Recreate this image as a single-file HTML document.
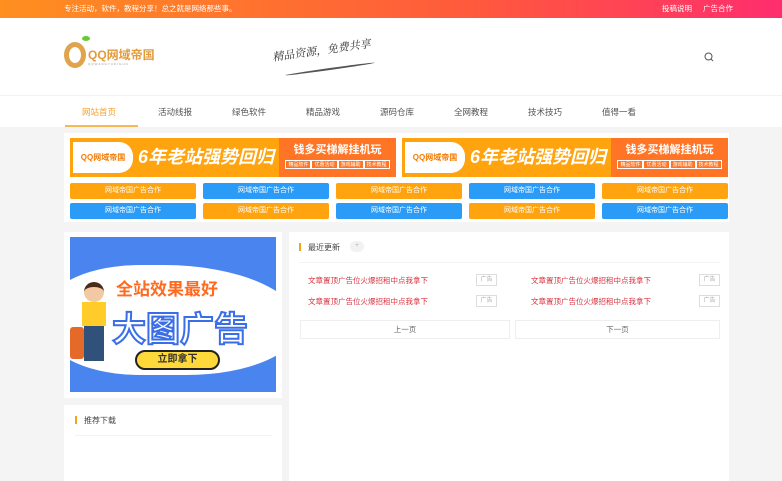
<!DOCTYPE html>
<html><head><meta charset="utf-8"><style>
*{margin:0;padding:0;box-sizing:border-box}
body{width:782px;height:481px;overflow:hidden;background:#f4f4f4;font-family:"Liberation Sans","Noto Sans CJK SC",sans-serif;font-size:8px;color:#333;position:relative}
.a{position:absolute}
.top{left:0;top:0;width:782px;height:18px;background:linear-gradient(90deg,#ff8f1f,#ff5a3c 60%,#ff2d6e);color:#fff;font-size:7.5px;line-height:18px}
.hd{left:0;top:18px;width:782px;height:109px;background:#fff}
.nav span{position:absolute;top:106px;font-size:8.5px;color:#555}
.btn{position:absolute;width:126px;height:16px;border-radius:2px;color:#fff;font-size:7px;text-align:center;line-height:16px}
.o{background:#ffa30f}.b{background:#2a9cf8}
.ban{position:absolute;top:138px;width:326px;height:39px;background:#ffa30f;overflow:hidden}
.ban .l{position:absolute;left:3px;top:4px;width:60px;height:31px;background:#fff;border-radius:0 14px 14px 0;color:#f57a00;font-weight:bold;font-size:8px;line-height:31px;text-align:center}
.ban .m{position:absolute;left:68px;top:4px;color:#fff;font-weight:bold;font-style:italic;font-size:18px;line-height:31px;white-space:nowrap}
.ban .r{position:absolute;right:0;top:0;width:117px;height:39px;background:#ff7525;color:#fff;text-align:center;font-weight:bold;font-size:11px;padding-top:3px}
.ban .r i{display:inline-block;font-style:normal;font-size:5px;border:1px solid #fff;padding:0 2px;margin-top:3px;font-weight:normal}
.it{position:absolute;color:#d9333f;font-size:7.5px}
.tg{position:absolute;width:21px;height:12px;border:1px solid #ddd;color:#aaa;font-size:6px;text-align:center;line-height:10px}
</style></head><body>
<div class="a top"><span class="a" style="left:64px">专注活动，软件，教程分享！总之就是网络那些事。</span><span class="a" style="left:662px">投稿说明</span><span class="a" style="left:703px">广告合作</span></div>
<div class="a hd"></div>
<div class="a" style="left:64px;top:42px;width:22px;height:26px;border:5px solid #e0a44c;border-radius:50%;background:#fff"></div>
<div class="a" style="left:82px;top:36px;width:8px;height:5px;background:#6c3;border-radius:50%"></div>
<div class="a" style="left:88px;top:46px;font-weight:bold;color:#e39b3a;font-size:12px">QQ网域帝国</div>
<div class="a" style="left:88px;top:62px;font-size:3px;color:#999;letter-spacing:1px">QQWANGYUDIGUO</div>
<div class="a" style="left:272px;top:42px;font-family:'Liberation Serif','Noto Serif CJK SC',serif;font-size:11px;color:#333;font-style:italic;transform:rotate(-8deg)">精品资源，免费共享</div>
<div class="a" style="left:285px;top:68px;width:90px;height:2px;background:#555;border-radius:50%;transform:rotate(-8deg)"></div>
<svg class="a" style="left:704px;top:52px" width="10" height="10" viewBox="0 0 10 10"><circle cx="4.5" cy="4.5" r="3.5" fill="none" stroke="#555" stroke-width="1"/><path d="M7 7l2 2" stroke="#555"/></svg>
<div class="a" style="left:0;top:95px;width:782px;height:1px;background:#f2f2f2"></div>
<div class="nav"><span style="left:82px;color:#f5a12a">网站首页</span><span style="left:158px">活动线报</span><span style="left:232px">绿色软件</span><span style="left:306px">精品游戏</span><span style="left:380px">源码仓库</span><span style="left:454px">全网教程</span><span style="left:528px">技术技巧</span><span style="left:602px">值得一看</span></div>
<div class="a" style="left:65px;top:125px;width:73px;height:2px;background:#f5b955"></div>
<div class="a" style="left:64px;top:133px;width:665px;height:89px;background:#fff"></div>
<div class="ban" style="left:70px"><div class="l">QQ网域帝国</div><div class="m">6年老站强势回归</div><div class="r">钱多买梯解挂机玩<br><i>精品软件</i><i>优惠活动</i><i>游戏辅助</i><i>技术教程</i></div></div>
<div class="ban" style="left:402px"><div class="l">QQ网域帝国</div><div class="m">6年老站强势回归</div><div class="r">钱多买梯解挂机玩<br><i>精品软件</i><i>优惠活动</i><i>游戏辅助</i><i>技术教程</i></div></div>
<div class="btn o" style="left:70px;top:183px">网域帝国广告合作</div><div class="btn b" style="left:203px;top:183px">网域帝国广告合作</div><div class="btn o" style="left:336px;top:183px">网域帝国广告合作</div><div class="btn b" style="left:469px;top:183px">网域帝国广告合作</div><div class="btn o" style="left:602px;top:183px">网域帝国广告合作</div>
<div class="btn b" style="left:70px;top:203px">网域帝国广告合作</div><div class="btn o" style="left:203px;top:203px">网域帝国广告合作</div><div class="btn b" style="left:336px;top:203px">网域帝国广告合作</div><div class="btn o" style="left:469px;top:203px">网域帝国广告合作</div><div class="btn b" style="left:602px;top:203px">网域帝国广告合作</div>
<div class="a" style="left:64px;top:232px;width:218px;height:166px;background:#fff"></div>
<div class="a" style="left:70px;top:237px;width:206px;height:155px;background:#4a84ee;overflow:hidden">
<div class="a" style="left:-20px;top:28px;width:250px;height:110px;background:#fff;border-radius:40% 60% 50% 40%"></div>
<div class="a" style="left:46px;top:38px;color:#ff6a1f;font-weight:bold;font-size:17px">全站效果最好</div>
<div class="a" style="left:42px;top:65px;color:#fff;font-weight:bold;font-size:34px;-webkit-text-stroke:2px #3a6ee8">大图广告</div>
<div class="a" style="left:65px;top:113px;width:85px;height:20px;background:#ffd83a;border:2px solid #222;border-radius:10px;text-align:center;font-weight:bold;font-size:10px;line-height:16px">立即拿下</div>
<div class="a" style="left:14px;top:45px;width:20px;height:20px;background:#f3c9a3;border-radius:50%;border-top:5px solid #4a2b17"></div>
<div class="a" style="left:12px;top:65px;width:24px;height:24px;background:#ffcc2a"></div>
<div class="a" style="left:14px;top:89px;width:20px;height:35px;background:#30517a"></div>
<div class="a" style="left:0;top:90px;width:14px;height:32px;background:#e56a2a;border-radius:3px"></div>
</div>
<div class="a" style="left:64px;top:405px;width:218px;height:76px;background:#fff"></div>
<div class="a" style="left:75px;top:416px;width:2px;height:8px;background:#f5a31a"></div>
<div class="a" style="left:84px;top:415px;font-size:8px;color:#444">推荐下载</div>
<div class="a" style="left:75px;top:435px;width:197px;height:1px;background:#f2f2f2"></div>
<div class="a" style="left:289px;top:232px;width:440px;height:249px;background:#fff"></div>
<div class="a" style="left:299px;top:243px;width:2px;height:8px;background:#f5a31a"></div>
<div class="a" style="left:308px;top:242px;font-size:8px;color:#444">最近更新</div>
<div class="a" style="left:350px;top:241px;width:14px;height:11px;background:#f2f2f2;border-radius:6px;color:#aaa;font-size:6px;text-align:center;line-height:11px">+</div>
<div class="a" style="left:299px;top:262px;width:421px;height:1px;background:#f3f3f3"></div>
<div class="it" style="left:308px;top:275px">文章置顶广告位火爆招租中点我拿下</div><div class="tg" style="left:476px;top:274px">广告</div>
<div class="it" style="left:308px;top:296px">文章置顶广告位火爆招租中点我拿下</div><div class="tg" style="left:476px;top:295px">广告</div>
<div class="it" style="left:531px;top:275px">文章置顶广告位火爆招租中点我拿下</div><div class="tg" style="left:699px;top:274px">广告</div>
<div class="it" style="left:531px;top:296px">文章置顶广告位火爆招租中点我拿下</div><div class="tg" style="left:699px;top:295px">广告</div>
<div class="a" style="left:300px;top:320px;width:210px;height:19px;border:1px solid #eee;text-align:center;line-height:17px;color:#666;font-size:7.5px">上一页</div>
<div class="a" style="left:515px;top:320px;width:205px;height:19px;border:1px solid #eee;text-align:center;line-height:17px;color:#666;font-size:7.5px">下一页</div>
</body></html>
